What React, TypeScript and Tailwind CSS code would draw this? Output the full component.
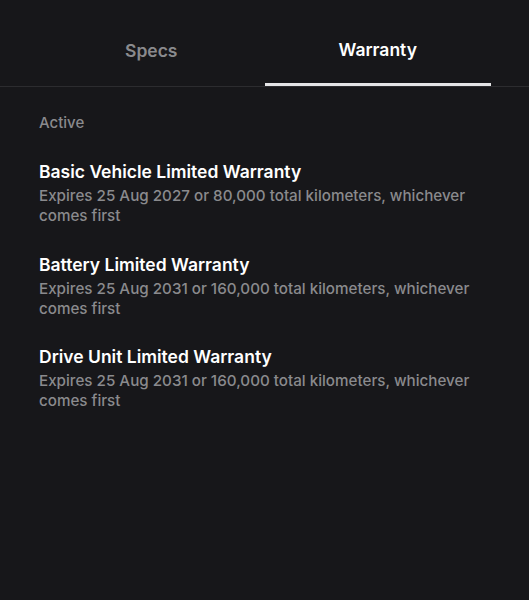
const warranties = [
  {
    title: 'Basic Vehicle Limited Warranty',
    detail: 'Expires 25 Aug 2027 or 80,000 total kilometers, whichever comes first',
  },
  {
    title: 'Battery Limited Warranty',
    detail: 'Expires 25 Aug 2031 or 160,000 total kilometers, whichever comes first',
  },
  {
    title: 'Drive Unit Limited Warranty',
    detail: 'Expires 25 Aug 2031 or 160,000 total kilometers, whichever comes first',
  },
];

function App() {
  return (
    <div className="min-h-screen bg-[#17171a] font-['Inter',sans-serif] antialiased">
      {/* Tabs */}
      <div className="border-b border-[#2c2c2f]">
        <div className="mx-[38px] grid grid-cols-2">
          <button className="h-[86px] pt-[17px] text-[17.5px] font-semibold text-[#8a8a8d]">
            Specs
          </button>
          <button className="h-[86px] pt-[17px] text-[17.5px] font-semibold text-white border-b-[3px] border-[#e4e4e6] -mb-px">
            Warranty
          </button>
        </div>
      </div>

      {/* Warranty list */}
      <div className="px-[39px] pt-[26px]">
        <p className="text-[15px] font-medium text-[#8a8a8d] leading-5">Active</p>
        <div className="mt-[27px] flex flex-col gap-[26.5px]">
          {warranties.map((w) => (
            <div key={w.title}>
              <h3 className="text-[17.5px] font-semibold text-white leading-6">{w.title}</h3>
              <p className="mt-[2px] text-[15.2px] font-medium text-[#8a8a8d] leading-5">
                {w.detail}
              </p>
            </div>
          ))}
        </div>
      </div>
    </div>
  );
}

export default App;
